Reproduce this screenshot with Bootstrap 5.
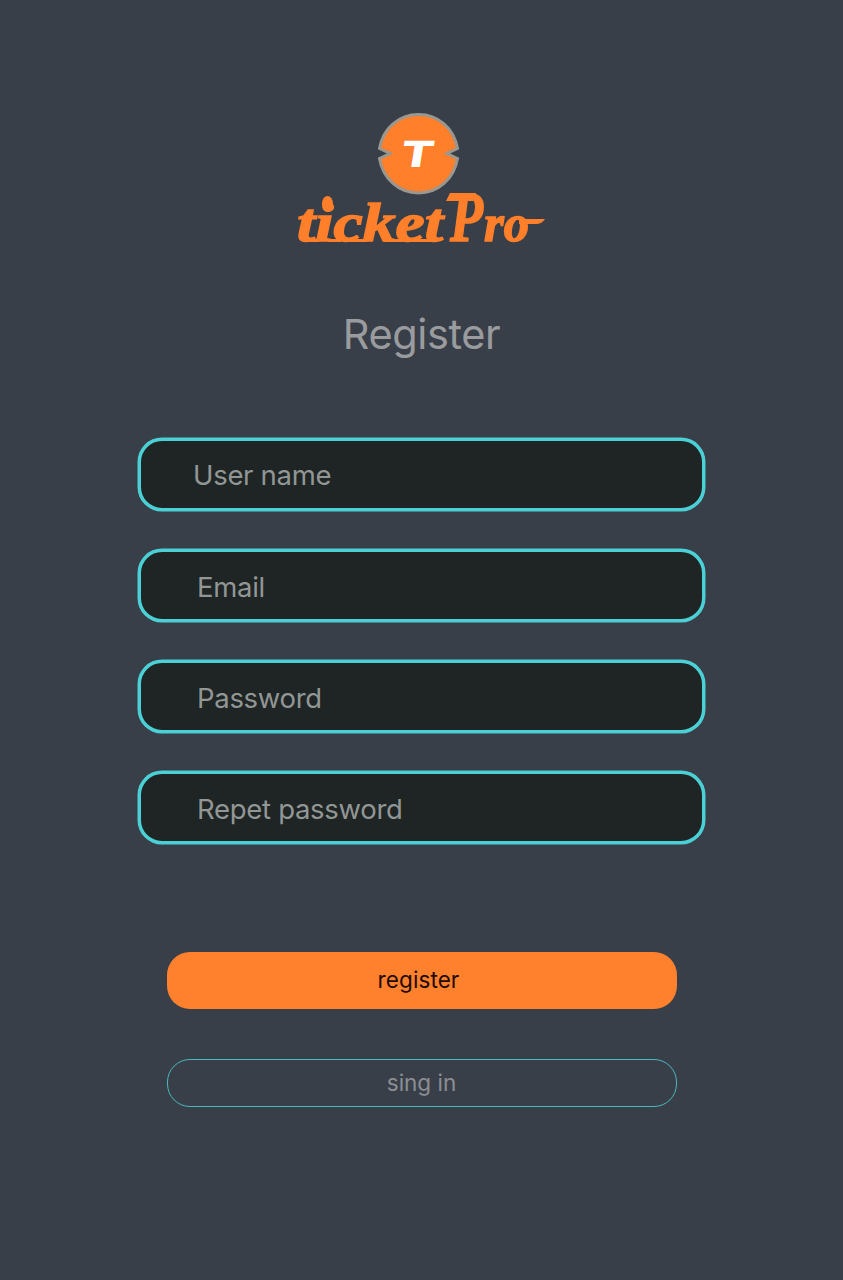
<!DOCTYPE html>
<html lang="en">
<head>
<meta charset="utf-8">
<meta name="viewport" content="width=device-width, initial-scale=1">
<title>ticketPro – Register</title>
<link rel="stylesheet" href="https://cdn.jsdelivr.net/npm/bootstrap@5.3.0/dist/css/bootstrap.min.css">
<style>
body{background:#393f49;font-family:Inter,"Liberation Sans",sans-serif;color:#999b9e}
.page{min-height:1280px;padding-top:105px}
.brand-logo{width:270px;height:150px;margin-right:1px}
.brand-logo text{font-family:"Liberation Serif",serif;font-weight:700;font-style:italic;fill:#ff7f2a;stroke:#ff7f2a;stroke-width:1.5}
.brand-logo .mono{font-family:Inter,sans-serif;font-weight:800;font-style:normal;fill:#fff;stroke:none}
.title{font-size:41.5px;line-height:50px;font-weight:400;margin:54px 0 0;letter-spacing:-.4px}
.fields{width:567px;margin-top:79px;gap:38px}
.fields .form-control{height:73px;border:3px solid #4bd0d6;border-radius:24px;background:#1e2524;padding:2px 0 0 56px;font-size:27.5px;letter-spacing:-.3px;color:#999b9e;box-shadow:0 0 0 .5px #4bd0d6}
.fields .form-control.first-field{padding:0 0 0 52px}
.fields .form-control::placeholder{color:#929695;opacity:1}
.actions{width:510px;margin-top:108px;gap:50px}
.actions .btn{font-size:22.5px;line-height:1;border-radius:23px;padding:0}
.actions .btn-register{height:57px;background:#ff812e;color:#210b05;border:0;padding-right:6px;letter-spacing:.1px}
.actions .btn-signin{height:48px;border:1px solid #49b9bf;color:#8b8e92}
</style>
</head>
<body>
<main class="page d-flex flex-column align-items-center">
  <svg class="brand-logo" viewBox="286 105 270 150" role="img" aria-label="ticketPro">
    <path d="M379.5 148.5C383 128 399 114.5 418.500 114.500C438 114.500 454 128 457.500 148.500L447 153.500L457.500 158.500C454 179 438 193 418.500 193C399 193 383 179 379.500 158.500L390 153.500Z" fill="#ff7f2a" stroke="#999790" stroke-width="3"/>
    <text class="mono" transform="translate(399 166.500) skewX(-9) scale(1.36 1)" font-size="36">T</text>
    <!-- joining strokes between the letters -->
    <path d="M306 240.500H318M329 240.500H340M350 240.500H366M385 240.500H402M412 240.500H430" fill="none" stroke="#ff7f2a" stroke-width="3" stroke-linecap="round"/>
    <ellipse cx="327.500" cy="204" rx="5.500" ry="8" fill="#ff7f2a"/>
    <path d="M450 193H476L474 201H446Z" fill="#ff7f2a"/>
    <path d="M519 219H545Q542 224 536 224H519Z" fill="#ff7f2a"/>
    <text x="297" y="241" font-size="55" textLength="146" lengthAdjust="spacingAndGlyphs">ticket</text>
    <text x="450" y="241" font-size="71" textLength="33" lengthAdjust="spacingAndGlyphs">P</text>
    <text x="484" y="241" font-size="52" textLength="45" lengthAdjust="spacingAndGlyphs">ro</text>
  </svg>
  <h1 class="title">Register</h1>
  <form class="fields d-flex flex-column">
    <input class="form-control first-field" type="text" placeholder="User name" aria-label="User name">
    <input class="form-control" type="email" placeholder="Email" aria-label="Email">
    <input class="form-control" type="password" placeholder="Password" aria-label="Password">
    <input class="form-control" type="password" placeholder="Repet password" aria-label="Repet password">
  </form>
  <div class="actions d-flex flex-column">
    <button class="btn btn-register" type="button">register</button>
    <button class="btn btn-signin" type="button">sing in</button>
  </div>
</main>
<script src="https://cdn.jsdelivr.net/npm/bootstrap@5.3.0/dist/js/bootstrap.bundle.min.js"></script>
</body>
</html>
